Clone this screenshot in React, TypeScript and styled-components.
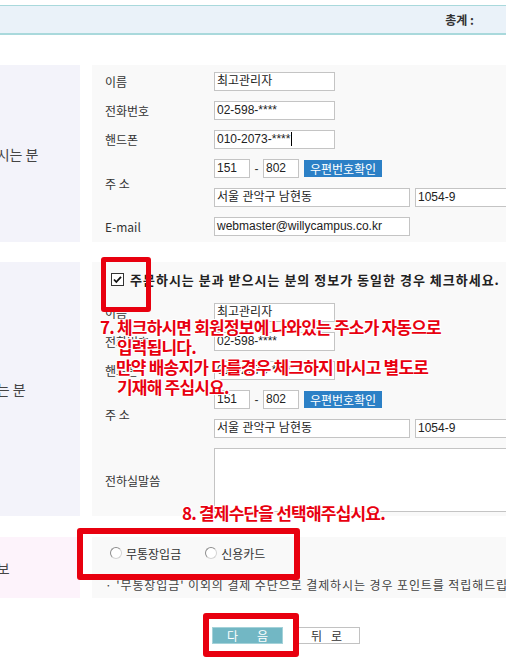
import React from "react";
import styled, { createGlobalStyle } from "styled-components";

const GlobalStyle = createGlobalStyle`
  html, body { margin: 0; padding: 0; background: #fff; }
  body {
    font-family: "Liberation Sans", "Noto Sans CJK KR", sans-serif;
    font-size: 12px;
    color: #333;
    overflow: hidden;
  }
  * { box-sizing: border-box; }
`;

const Page = styled.div`
  position: relative;
  width: 506px;
  height: 660px;
  overflow: hidden;
  padding-top: 5px;
`;

const TopBar = styled.div`
  height: 30px;
  border-top: 1px solid #a9d9dc;
  border-bottom: 2px solid #a9d9dc;
  background: #eaf2f9;
  display: flex;
  align-items: center;
  justify-content: flex-end;
  padding-right: 32px;
  font-family: "Noto Sans CJK KR", sans-serif;
  font-weight: 700;
  font-size: 12px;
  color: #333;
`;

const Content = styled.div`
  width: 660px;
  margin-top: 30px;
  display: flex;
  flex-direction: column;
  gap: 20px;
`;

const Section = styled.div<{ $mt?: number }>`
  display: flex;
  gap: 12px;
  margin-top: ${(p) => p.$mt ?? 0}px;
`;

const LabelCell = styled.div<{ $tone: string }>`
  flex: 0 0 200px;
  margin-left: -120px;
  padding-left: 78px;
  display: flex;
  align-items: center;
  background: ${(p) => p.$tone};
  font-family: "Noto Sans CJK KR", sans-serif;
  font-size: 14px;
  color: #444;
`;

const Panel = styled.div<{ $pt: number; $pb: number }>`
  flex: 1;
  background: #f9f9f9;
  display: grid;
  grid-template-columns: 109px 1fr;
  row-gap: 10px;
  align-items: center;
  padding: ${(p) => p.$pt}px 0 ${(p) => p.$pb}px 13px;
`;

const FieldLabel = styled.div<{ $span?: number }>`
  grid-row: span ${(p) => p.$span ?? 1};
  font-family: "Noto Sans CJK KR", sans-serif;
  font-size: 12px;
  color: #333;
  white-space: pre;
`;

const Field = styled.div<{ $w: number; $h?: number }>`
  width: ${(p) => p.$w}px;
  height: ${(p) => p.$h ?? 19}px;
  border: 1px solid #c4c4c4;
  background: #fff;
  padding: 0 2px;
  line-height: 17px;
  font-family: "Liberation Sans", "Noto Sans CJK KR", sans-serif;
  font-size: 12px;
  color: #222;
  white-space: nowrap;
  overflow: hidden;
  flex: none;
`;

const Caret = styled.span`
  display: inline-block;
  width: 1px;
  height: 14px;
  background: #000;
  vertical-align: -3px;
  margin-left: 1px;
`;

const FieldRow = styled.div<{ $gap?: number }>`
  display: flex;
  align-items: center;
  gap: ${(p) => p.$gap ?? 0}px;
`;

const Dash = styled.span`
  width: 13px;
  text-align: center;
  color: #333;
`;

const ZipButton = styled.div`
  width: 78px;
  height: 17px;
  margin-left: 5px;
  background: #2c80c6;
  color: #fff;
  font-family: "Noto Sans CJK KR", sans-serif;
  font-size: 12px;
  display: flex;
  align-items: center;
  justify-content: center;
`;

const CheckRow = styled.div`
  grid-column: 1 / -1;
  display: flex;
  align-items: center;
  gap: 6px;
  height: 19px;
  margin-bottom: 4px;
  padding-left: 6px;
  font-family: "Noto Sans CJK KR", sans-serif;
  font-weight: 700;
  font-size: 13px;
  letter-spacing: 1px;
  color: #222;
  white-space: nowrap;
`;

const PayPanel = styled.div`
  flex: 1;
  background: #f9f9f9;
  height: 61px;
  padding: 7px 0 0 13px;
  display: flex;
  flex-direction: column;
`;

const RadioRow = styled.div`
  display: flex;
  align-items: center;
  height: 18px;
  padding-left: 5px;
  gap: 24px;
  font-family: "Noto Sans CJK KR", sans-serif;
  font-size: 12px;
  color: #333;
`;

const RadioOption = styled.label`
  display: flex;
  align-items: center;
  gap: 4px;
`;

const Radio = styled.span`
  width: 12px;
  height: 12px;
  border-radius: 50%;
  border: 1px solid #8c8c8c;
  border-right-color: #d4d4d4;
  border-bottom-color: #d4d4d4;
  background: #fff;
`;

const Note = styled.div`
  margin-top: 14px;
  font-family: "Noto Sans CJK KR", sans-serif;
  font-size: 12px;
  letter-spacing: 0.9px;
  color: #444;
  white-space: nowrap;
`;

const ButtonRow = styled.div`
  margin-top: 29px;
  padding-left: 212px;
  display: flex;
  gap: 10px;
`;

const Btn = styled.div<{ $primary?: boolean; $w: number; $spread: number }>`
  width: ${(p) => p.$w}px;
  height: 17px;
  display: flex;
  align-items: center;
  justify-content: center;
  gap: ${(p) => p.$spread}px;
  font-family: "Noto Sans CJK KR", sans-serif;
  font-size: 12px;
  background: ${(p) => (p.$primary ? "#72b7c4" : "#fff")};
  color: ${(p) => (p.$primary ? "#fff" : "#333")};
  border: 1px solid ${(p) => (p.$primary ? "#a4d2d9" : "#c2c2c2")};
`;

const RedBox = styled.div<{ $x: number; $y: number; $w: number; $h: number; $b: number }>`
  position: absolute;
  left: ${(p) => p.$x}px;
  top: ${(p) => p.$y}px;
  width: ${(p) => p.$w}px;
  height: ${(p) => p.$h}px;
  border: ${(p) => p.$b}px solid #e8000f;
  border-radius: 3px;
`;

const RedNote = styled.div<{ $x: number; $y: number }>`
  position: absolute;
  left: ${(p) => p.$x}px;
  top: ${(p) => p.$y}px;
  font-family: "Noto Sans CJK KR", sans-serif;
  font-weight: 700;
  font-size: 17px;
  line-height: 20px;
  letter-spacing: -0.8px;
  color: #e8000f;
  white-space: nowrap;
  text-shadow: 1px 1px 0 #fff, -1px -1px 0 #fff, 1px -1px 0 #fff, -1px 1px 0 #fff,
    0 0 2px #fff;
`;

const NoteLine = styled.div<{ $indent?: number }>`
  padding-left: ${(p) => p.$indent ?? 0}px;
`;

const CheckIcon = () => (
  <svg width="13" height="13" viewBox="0 0 13 13">
    <rect x="0.5" y="0.5" width="12" height="12" fill="#fff" stroke="#333" />
    <path d="M3 6.5 L5.3 9 L10 3.8" fill="none" stroke="#111" strokeWidth="1.8" />
  </svg>
);

export default function App() {
  return (
    <>
      <GlobalStyle />
      <Page>
        <TopBar>총계 :</TopBar>
        <Content>
          <Section>
            <LabelCell $tone="#f3f3fa">주문하시는 분</LabelCell>
            <Panel $pt={7} $pb={6}>
              <FieldLabel>이름</FieldLabel>
              <Field $w={121}>최고관리자</Field>
              <FieldLabel>전화번호</FieldLabel>
              <Field $w={121}>02-598-****</Field>
              <FieldLabel>핸드폰</FieldLabel>
              <Field $w={121}>
                010-2073-****
                <Caret />
              </Field>
              <FieldLabel $span={2}>주 소</FieldLabel>
              <FieldRow>
                <Field $w={36}>151</Field>
                <Dash>-</Dash>
                <Field $w={36}>802</Field>
                <ZipButton>우편번호확인</ZipButton>
              </FieldRow>
              <FieldRow $gap={5}>
                <Field $w={196}>서울 관악구 남현동</Field>
                <Field $w={130}>1054-9</Field>
              </FieldRow>
              <FieldLabel>E-mail</FieldLabel>
              <Field $w={196}>webmaster@willycampus.co.kr</Field>
            </Panel>
          </Section>

          <Section>
            <LabelCell $tone="#f3f3fa">받으시는 분</LabelCell>
            <Panel $pt={8} $pb={4}>
              <CheckRow>
                <CheckIcon />
                주문하시는 분과 받으시는 분의 정보가 동일한 경우 체크하세요.
              </CheckRow>
              <FieldLabel>이름</FieldLabel>
              <Field $w={121}>최고관리자</Field>
              <FieldLabel>전화번호</FieldLabel>
              <Field $w={121}>02-598-****</Field>
              <FieldLabel>핸드폰</FieldLabel>
              <Field $w={121}>010-2073-****</Field>
              <FieldLabel $span={2}>주 소</FieldLabel>
              <FieldRow>
                <Field $w={36}>151</Field>
                <Dash>-</Dash>
                <Field $w={36}>802</Field>
                <ZipButton>우편번호확인</ZipButton>
              </FieldRow>
              <FieldRow $gap={5}>
                <Field $w={196}>서울 관악구 남현동</Field>
                <Field $w={130}>1054-9</Field>
              </FieldRow>
              <FieldLabel>전하실말씀</FieldLabel>
              <Field $w={330} $h={64} />
            </Panel>
          </Section>

          <Section $mt={1}>
            <LabelCell $tone="#fdf3fb">결제정보</LabelCell>
            <PayPanel>
              <RadioRow>
                <RadioOption>
                  <Radio />
                  무통장입금
                </RadioOption>
                <RadioOption>
                  <Radio />
                  신용카드
                </RadioOption>
              </RadioRow>
              <Note>· '무통장입금' 이외의 결제 수단으로 결제하시는 경우 포인트를 적립해드립니다.</Note>
            </PayPanel>
          </Section>
        </Content>

        <ButtonRow>
          <Btn $primary $w={71} $spread={19}>
            <span>다</span>
            <span>음</span>
          </Btn>
          <Btn $w={67} $spread={9}>
            <span>뒤</span>
            <span>로</span>
          </Btn>
        </ButtonRow>

        <RedBox $x={101} $y={257} $w={50} $h={55} $b={5} />
        <RedNote $x={100} $y={317}>
          <NoteLine>7. 체크하시면 회원정보에 나와있는 주소가 자동으로</NoteLine>
          <NoteLine $indent={17}>입력됩니다.</NoteLine>
          <NoteLine $indent={16}>만약 배송지가 다를경우 체크하지 마시고 별도로</NoteLine>
          <NoteLine $indent={17}>기재해 주십시요.</NoteLine>
        </RedNote>
        <RedNote $x={182} $y={503}>8. 결제수단을 선택해주십시요.</RedNote>
        <RedBox $x={77} $y={528} $w={223} $h={52} $b={6} />
        <RedBox $x={203} $y={613} $w={96} $h={44} $b={6} />
      </Page>
    </>
  );
}
